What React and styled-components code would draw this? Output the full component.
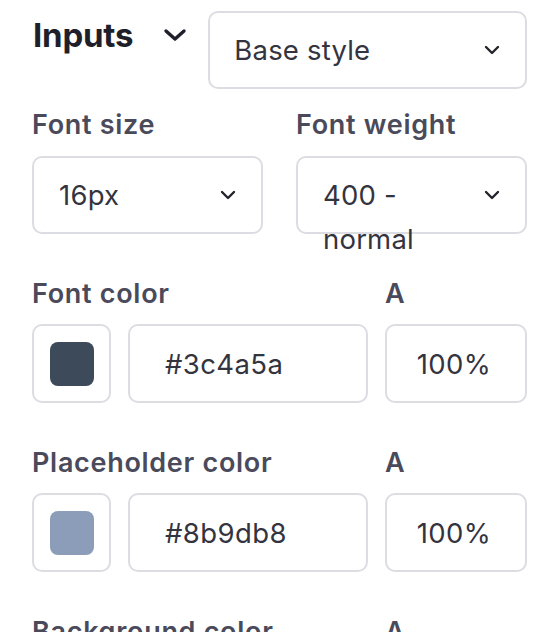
import React from 'react'
import styled, { createGlobalStyle } from 'styled-components'

const GlobalStyle = createGlobalStyle`
  html, body {
    margin: 0;
    background: #ffffff;
  }
  body {
    font-family: Inter, 'Noto Sans', sans-serif;
    -webkit-font-smoothing: antialiased;
  }
`

const Panel = styled.div`
  width: 560px;
  box-sizing: border-box;
  padding: 11px 33px 0 32px;
  display: flex;
  flex-direction: column;
`

const Header = styled.div`
  display: flex;
  align-items: flex-start;
  gap: 21px;
  margin-bottom: 18px;
`

const Title = styled.div`
  display: flex;
  align-items: center;
  gap: 30px;
  height: 48px;
  padding-left: 1px;
  font-size: 33px;
  font-weight: 700;
  color: #1f1f2b;
  letter-spacing: -0.2px;
`

const Select = styled.div`
  flex: ${(p) => (p.$grow ? 1 : 'none')};
  box-sizing: border-box;
  height: 78px;
  border: 2px solid #dcdce3;
  border-radius: 10px;
  padding: 15px 25px 0 ${(p) => (p.$grow ? '24px' : '25px')};
  display: flex;
  align-items: flex-start;
  gap: 40px;
`

const Value = styled.span`
  flex: 1;
  min-width: 0;
  font-size: 27.5px;
  line-height: 44px;
  letter-spacing: 0.2px;
  color: #34343f;
`

const Chevron = styled.svg`
  flex: none;
  align-self: center;
  margin-top: -15px;
`

const FieldGrid = styled.div`
  display: grid;
  grid-template-columns: 1fr 1fr;
  column-gap: 33px;
`

const Field = styled.div`
  display: flex;
  flex-direction: column;
  gap: 13px;
`

const Label = styled.div`
  font-size: 27px;
  line-height: 36px;
  font-weight: 600;
  letter-spacing: 0.7px;
  color: #4a4a5b;
  grid-column: ${(p) => p.$span || 'auto'};
`

const ColorSection = styled.div`
  margin-top: 42px;
  display: grid;
  grid-template-columns: 79px 1fr 142px;
  column-gap: 17px;
  row-gap: 12px;
`

const Box = styled.div`
  box-sizing: border-box;
  height: 79px;
  border: 2px solid #dcdce3;
  border-radius: 10px;
  display: flex;
  align-items: center;
  justify-content: ${(p) => (p.$center ? 'center' : 'flex-start')};
  padding: ${(p) => p.$pad || '0'};
  font-size: 27.5px;
  letter-spacing: 0.4px;
  color: #34343f;
`

const Swatch = styled.div`
  width: 44px;
  height: 44px;
  border-radius: 8px;
  background: ${(p) => p.$color};
`

const SmallChevron = () => (
  <Chevron width="16" height="10" viewBox="0 0 16 10">
    <polyline
      points="2,2 8,8 14,2"
      fill="none"
      stroke="#23232c"
      strokeWidth="2.4"
      strokeLinecap="round"
      strokeLinejoin="round"
    />
  </Chevron>
)

const TitleChevron = () => (
  <svg width="24" height="14" viewBox="0 0 24 14">
    <polyline
      points="3,3 12,11 21,3"
      fill="none"
      stroke="#1f1f2b"
      strokeWidth="3.4"
      strokeLinecap="round"
      strokeLinejoin="round"
    />
  </svg>
)

const colors = [
  { label: 'Font color', hex: '#3c4a5a', alpha: '100%' },
  { label: 'Placeholder color', hex: '#8b9db8', alpha: '100%' },
  { label: 'Background color', hex: '#ffffff', alpha: '100%' },
]

const App = () => {
  return (
    <>
      <GlobalStyle />
      <Panel>
        <Header>
          <Title>
            Inputs
            <TitleChevron />
          </Title>
          <Select $grow>
            <Value>Base style</Value>
            <SmallChevron />
          </Select>
        </Header>

        <FieldGrid>
          <Field>
            <Label>Font size</Label>
            <Select>
              <Value>16px</Value>
              <SmallChevron />
            </Select>
          </Field>
          <Field>
            <Label>Font weight</Label>
            <Select>
              <Value>400 - normal</Value>
              <SmallChevron />
            </Select>
          </Field>
        </FieldGrid>

        {colors.map((c) => (
          <ColorSection key={c.label}>
            <Label $span="1 / 3">{c.label}</Label>
            <Label>A</Label>
            <Box $center>
              <Swatch $color={c.hex} />
            </Box>
            <Box $pad="0 0 0 35px">{c.hex}</Box>
            <Box $center $pad="0 4px 0 0">{c.alpha}</Box>
          </ColorSection>
        ))}
      </Panel>
    </>
  )
}

export default App
